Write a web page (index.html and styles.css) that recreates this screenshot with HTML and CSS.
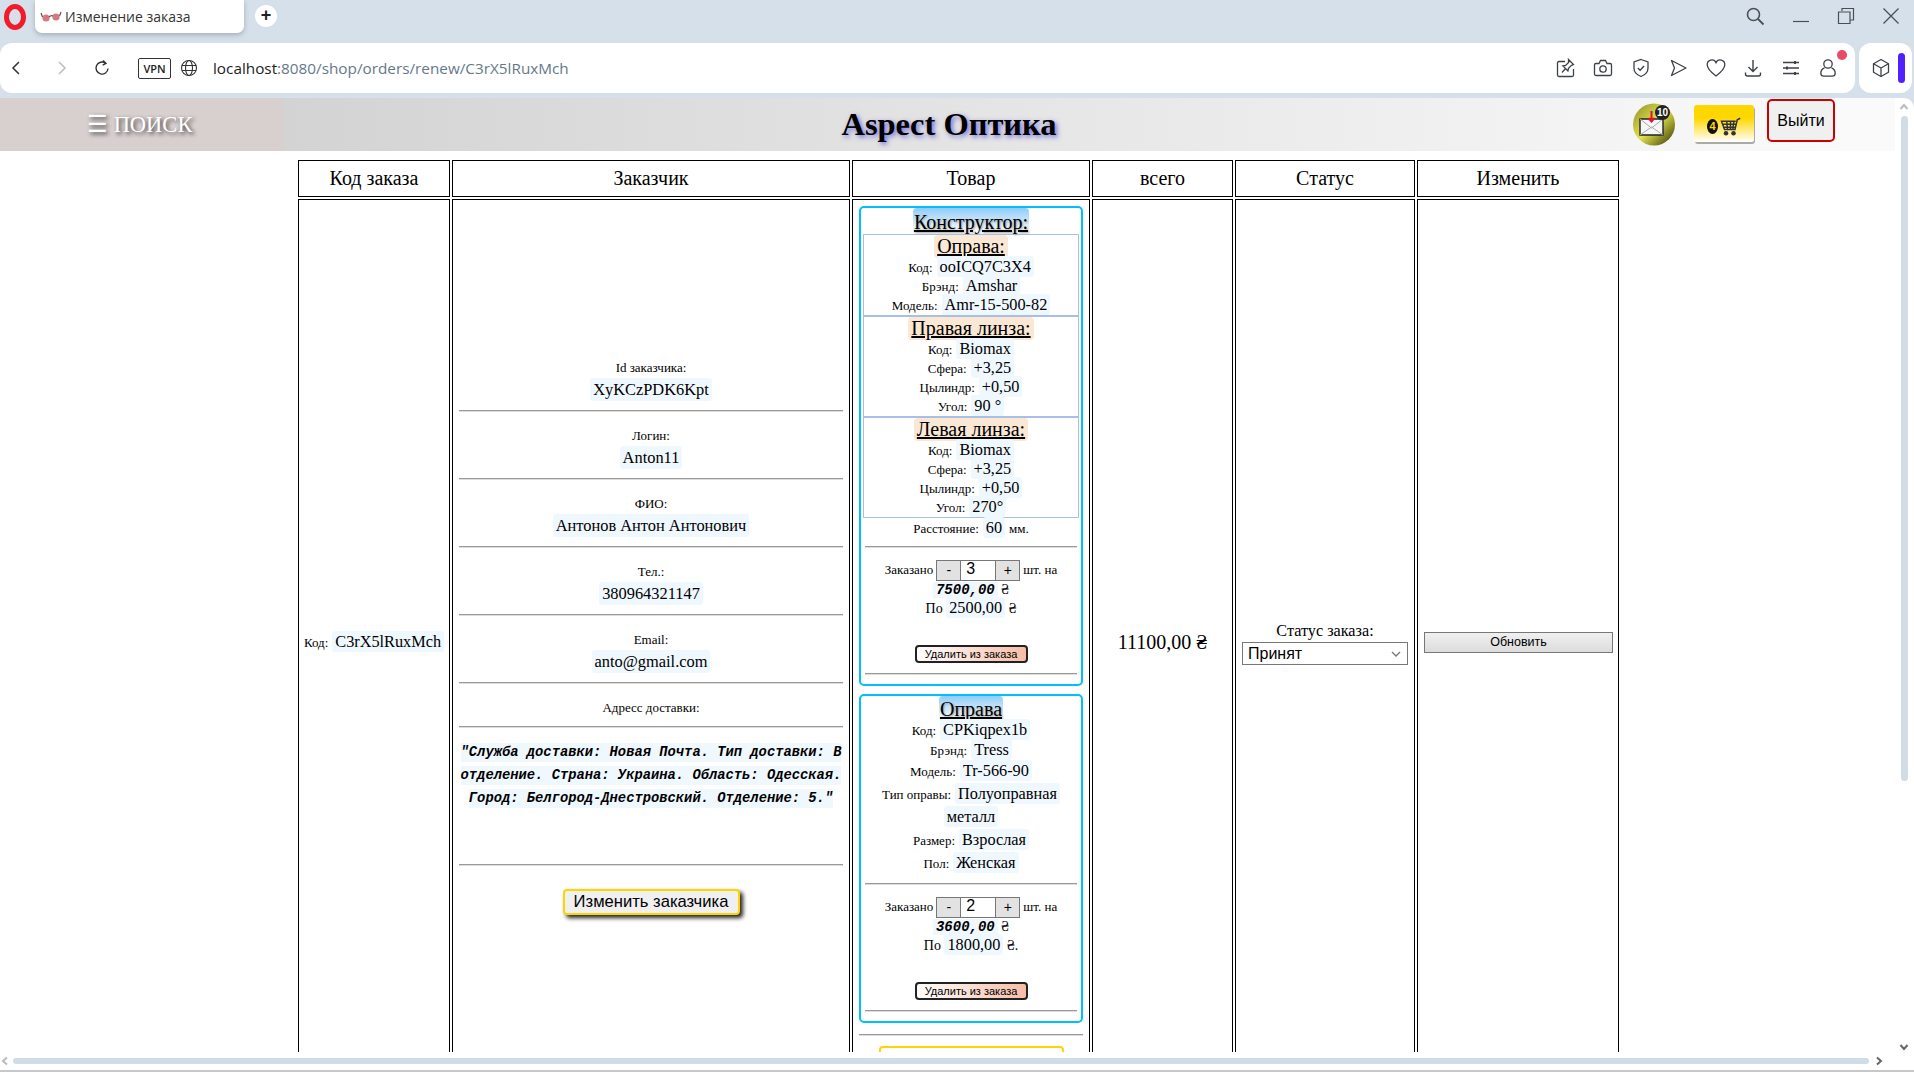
FILE: index.html
```html
<!DOCTYPE html>
<html lang="ru">
<head>
  <meta charset="UTF-8">
  <title>Изменение заказа</title>
  <link rel="stylesheet" href="styles.css">
</head>
<body>

  <div class="tabbar">
    <svg class="opera" width="24" height="28" viewBox="0 0 24 28"><ellipse cx="12" cy="14" rx="8.5" ry="10.5" fill="none" stroke="#f01b2d" stroke-width="5"/></svg>
    <div class="tab">
      <svg width="22" height="12" viewBox="0 0 22 12"><circle cx="6" cy="7" r="3.6" fill="#d9777f"/><circle cx="16" cy="6" r="3.6" fill="#d9777f"/><path d="M9 6q2-2 4-1M2.500 6 1 2M19.500 5 21 1" fill="none" stroke="#555" stroke-width="1.200"/></svg>
      <span>Изменение заказа</span>
    </div>
    <div class="newtab">+</div>
    <div class="winbtns">
      <svg width="20" height="20" viewBox="0 0 20 20"><circle cx="8.500" cy="8.500" r="6" fill="none" stroke="#4a4f55" stroke-width="1.600"/><path d="M13 13l5.500 5.500" stroke="#4a4f55" stroke-width="1.800"/></svg>
      <svg width="18" height="20" viewBox="0 0 18 20"><path d="M1 15.500h16" stroke="#4a4f55" stroke-width="1.200"/></svg>
      <svg width="18" height="18" viewBox="0 0 18 18"><path d="M5 4V1.500h11.500V13H13M1.500 5h11.500v11.500H1.500z" fill="none" stroke="#4a4f55" stroke-width="1.200"/></svg>
      <svg width="18" height="18" viewBox="0 0 18 18"><path d="M1.500 1.500l15 15M16.500 1.500l-15 15" stroke="#4a4f55" stroke-width="1.300"/></svg>
    </div>
  </div>

  <div class="toolbar">
    <div class="addressbar">
      <svg class="nav-ico" width="12" height="16" viewBox="0 0 12 16"><path d="M9 2 3 8l6 6" fill="none" stroke="#333" stroke-width="1.500"/></svg>
      <svg class="nav-ico fwd" width="12" height="16" viewBox="0 0 12 16"><path d="M3 2l6 6-6 6" fill="none" stroke="#b8bec4" stroke-width="1.500"/></svg>
      <svg class="nav-ico reload" width="18" height="18" viewBox="0 0 18 18"><path d="M15 9.500A6 6 0 1 1 12.500 4.200M10 1.500l3 2.800-3.300 1.800" fill="none" stroke="#333" stroke-width="1.400"/></svg>
      <div class="vpn">VPN</div>
      <svg class="globe" width="18" height="18" viewBox="0 0 18 18"><g fill="none" stroke="#333" stroke-width="1.100"><circle cx="9" cy="9" r="7.500"/><ellipse cx="9" cy="9" rx="3.500" ry="7.500"/><path d="M2 6.500h14M2 11.500h14"/></g></svg>
      <div class="url">localhost<span>:8080/shop/orders/renew/C3rX5lRuxMch</span></div>
      <div class="tools">
        <svg width="20" height="20" viewBox="0 0 20 20"><g fill="none" stroke="#3c4248" stroke-width="1.300"><path d="M9 3.500H3A1.500 1.500 0 0 0 1.500 5v12A1.500 1.500 0 0 0 3 18.500h13a1.500 1.500 0 0 0 1.500-1.500v-6"/><path d="M12.500 1.500l5 5-2 .8-3 3-.6 2.700-5-5 2.700-.6 3-3zM9.500 10.500l-3.500 4"/></g></svg>
        <svg width="20" height="20" viewBox="0 0 20 20"><g fill="none" stroke="#3c4248" stroke-width="1.300"><path d="M3 5.500h3L7.500 2.500h5L14 5.500h3A1.500 1.500 0 0 1 18.500 7v9a1.500 1.500 0 0 1-1.500 1.500H3A1.500 1.500 0 0 1 1.500 16V7A1.500 1.500 0 0 1 3 5.500z"/><circle cx="10" cy="11" r="3.200"/></g></svg>
        <svg width="20" height="20" viewBox="0 0 20 20"><g fill="none" stroke="#3c4248" stroke-width="1.300"><path d="M10 1.500l7 2.500v6c0 4-3 7-7 8.500-4-1.500-7-4.500-7-8.500V4z"/><path d="M6.800 10l2.300 2.300 4-4.300"/></g></svg>
        <svg width="20" height="20" viewBox="0 0 20 20"><path d="M3.500 2.500 18 10 3.500 17.500 6.500 10z" fill="none" stroke="#3c4248" stroke-width="1.300" stroke-linejoin="round"/></svg>
        <svg width="20" height="20" viewBox="0 0 20 20"><path d="M10 18C4 13.500 1.200 10.500 1.200 6.800A4.600 4.600 0 0 1 10 4.700a4.600 4.600 0 0 1 8.800 2.100C18.800 10.500 16 13.500 10 18z" fill="none" stroke="#3c4248" stroke-width="1.300"/></svg>
        <svg width="20" height="20" viewBox="0 0 20 20"><g fill="none" stroke="#3c4248" stroke-width="1.400"><path d="M10 2v11M5.500 9 10 13.500 14.500 9M2.500 14.500v1.500a2 2 0 0 0 2 2h11a2 2 0 0 0 2-2v-1.500"/></g></svg>
        <svg width="20" height="20" viewBox="0 0 20 20"><g fill="none" stroke="#3c4248" stroke-width="1.400"><path d="M2 4.500h16M2 10h16M2 15.500h16"/></g><path d="M13 3h2v3h-2zM5 8.500h2v3H5zM13 14h2v3h-2z" fill="#3c4248"/></svg>
        <div class="user-ico">
          <svg width="20" height="20" viewBox="0 0 20 20"><g fill="none" stroke="#3c4248" stroke-width="1.300"><circle cx="10" cy="6" r="4.200"/><path d="M6.500 9.800C3.800 11 2.800 13 2.800 15c0 2 1.200 3.200 3 3.200h8.400c1.800 0 3-1.200 3-3.200 0-2-1-4-3.700-5.200"/></g></svg>
          <span class="red-dot"></span>
        </div>
      </div>
    </div>
    <div class="sidebox">
      <svg width="20" height="20" viewBox="0 0 20 20"><g fill="none" stroke="#3c4248" stroke-width="1.300" stroke-linejoin="round"><path d="M10 1.500l7.500 4.200v8.600L10 18.500l-7.500-4.200V5.700z"/><path d="M2.500 5.700 10 10l7.500-4.300M10 10v8.500"/></g></svg>
      <span class="pill"></span>
    </div>
  </div>

  <div class="viewport">
    <nav class="topnav">
      <div class="search-link">☰ ПОИСК</div>
      <div class="site-title">Aspect Оптика</div>
      <div class="nav-right">
        <div class="msg-btn">
          <svg width="44" height="43" viewBox="0 0 44 43">
            <defs><linearGradient id="metal" x1="0" y1="0" x2="1" y2="1"><stop offset="0" stop-color="#8f8f28"/><stop offset=".5" stop-color="#e3e34e"/><stop offset=".8" stop-color="#77771f"/><stop offset="1" stop-color="#2c2c10"/></linearGradient></defs>
            <ellipse cx="22" cy="21.500" rx="21" ry="21" fill="url(#metal)"/>
            <path d="M8 16h23v16H8z" fill="#f6f6f6" stroke="#222" stroke-width="1.400"/>
            <path d="M8 32l11.500-8L31 32M8 16l11.500 9L31 16" fill="none" stroke="#aaa"/>
            <path d="M19.500 8v10M16.500 15l3 3.500 3-3.500" fill="none" stroke="#e01030" stroke-width="2"/>
          </svg>
          <span class="msg-count">10</span>
        </div>
        <div class="cart-btn">
          <span class="cart-count">4</span>
          <svg width="23" height="21" viewBox="0 0 30 28"><g fill="none" stroke="#333" stroke-width="2"><path d="M28 3l-4 2-3 13H7L3 7h19M5 11h17M6 15h15M10 7l1 11M15 7v11M19.500 7l-1.500 11"/></g><circle cx="9" cy="23" r="3" fill="#333"/><circle cx="19" cy="23" r="3" fill="#333"/></svg>
        </div>
        <button class="logout-btn">Выйти</button>
      </div>
    </nav>

    <div class="page">
      <table class="orders">
        <thead>
          <tr>
            <th class="col-code">Код заказа</th>
            <th class="col-client">Заказчик</th>
            <th class="col-goods">Товар</th>
            <th class="col-total">всего</th>
            <th class="col-status">Статус</th>
            <th class="col-edit">Изменить</th>
          </tr>
        </thead>
        <tbody>
          <tr>
            <td class="code"><span class="lbl">Код:</span> <span class="val-sm">C3rX5lRuxMch</span></td>

            <td class="client">
              <div class="lbl-line"><span class="lbl">Id заказчика:</span></div>
              <div class="val-line"><span class="val">XyKCzPDK6Kpt</span></div>
              <hr>
              <div class="lbl-line"><span class="lbl">Логин:</span></div>
              <div class="val-line"><span class="val">Anton11</span></div>
              <hr>
              <div class="lbl-line"><span class="lbl">ФИО:</span></div>
              <div class="val-line"><span class="val">Антонов Антон Антонович</span></div>
              <hr>
              <div class="lbl-line"><span class="lbl">Тел.:</span></div>
              <div class="val-line"><span class="val">380964321147</span></div>
              <hr>
              <div class="lbl-line"><span class="lbl">Email:</span></div>
              <div class="val-line"><span class="val">anto@gmail.com</span></div>
              <hr>
              <div class="lbl-line"><span class="lbl">Адресс доставки:</span></div>
              <hr class="hr-short">
              <div class="address">
                <div class="addr-line"><span>"Служба доставки: Новая Почта. Тип доставки: В</span></div>
                <div class="addr-line"><span>отделение. Страна: Украина. Область: Одесская.</span></div>
                <div class="addr-line"><span>Город: Белгород-Днестровский. Отделение: 5."</span></div>
              </div>
              <hr>
              <button class="client-btn">Изменить заказчика</button>
            </td>

            <td class="goods">
              <div class="card">
                <div class="card-title"><span>Конструктор:</span></div>
                <div class="part">
                  <div class="part-title"><span>Оправа:</span></div>
                  <div class="row"><span class="lbl">Код:</span> <span class="val-sm">ooICQ7C3X4</span></div>
                  <div class="row"><span class="lbl">Брэнд:</span> <span class="val-sm">Amshar</span></div>
                  <div class="row"><span class="lbl">Модель:</span> <span class="val-sm">Amr-15-500-82</span></div>
                </div>
                <div class="part">
                  <div class="part-title"><span>Правая линза:</span></div>
                  <div class="row"><span class="lbl">Код:</span> <span class="val-sm">Biomax</span></div>
                  <div class="row"><span class="lbl">Сфера:</span> <span class="val-sm">+3,25</span></div>
                  <div class="row"><span class="lbl">Цылиндр:</span> <span class="val-sm">+0,50</span></div>
                  <div class="row"><span class="lbl">Угол:</span> <span class="val-sm">90 °</span></div>
                </div>
                <div class="part">
                  <div class="part-title"><span>Левая линза:</span></div>
                  <div class="row"><span class="lbl">Код:</span> <span class="val-sm">Biomax</span></div>
                  <div class="row"><span class="lbl">Сфера:</span> <span class="val-sm">+3,25</span></div>
                  <div class="row"><span class="lbl">Цылиндр:</span> <span class="val-sm">+0,50</span></div>
                  <div class="row"><span class="lbl">Угол:</span> <span class="val-sm">270°</span></div>
                </div>
                <div class="row"><span class="lbl">Расстояние:</span> <span class="val-sm">60</span> <span class="lbl">мм.</span></div>
                <hr class="hr-card">
                <div class="qty-line">
                  <span class="lbl">Заказано</span>
                  <span class="qty"><button>-</button><input value="3" readonly><button>+</button></span>
                  <span class="lbl">шт. на</span>
                </div>
                <div class="sum"><b>7500,00</b> ₴</div>
                <div class="per"><span class="lbl-md">По</span> <span class="val-sm">2500,00</span> ₴</div>
                <button class="del-btn">Удалить из заказа</button>
                <hr class="hr-end">
              </div>

              <div class="card">
                <div class="card-title short"><span>Оправа</span></div>
                <div class="row first"><span class="lbl">Код:</span> <span class="val-sm">CPKiqpex1b</span></div>
                <div class="row"><span class="lbl">Брэнд:</span> <span class="val-sm">Tress</span></div>
                <div class="row wide"><span class="lbl">Модель:</span> <span class="val-sm">Tr-566-90</span></div>
                <div class="row wide"><span class="lbl">Тип оправы:</span> <span class="val-sm">Полуоправная</span></div>
                <div class="row wide"><span class="val-sm">металл</span></div>
                <div class="row wide"><span class="lbl">Размер:</span> <span class="val-sm">Взрослая</span></div>
                <div class="row wide"><span class="lbl">Пол:</span> <span class="val-sm">Женская</span></div>
                <hr class="hr-card">
                <div class="qty-line">
                  <span class="lbl">Заказано</span>
                  <span class="qty"><button>-</button><input value="2" readonly><button>+</button></span>
                  <span class="lbl">шт. на</span>
                </div>
                <div class="sum"><b>3600,00</b> ₴</div>
                <div class="per"><span class="lbl-md">По</span> <span class="val-sm">1800,00</span> ₴.</div>
                <button class="del-btn">Удалить из заказа</button>
                <hr class="hr-end">
              </div>

              <hr class="hr-last">
              <div class="add-btn"></div>
            </td>

            <td class="total">11100,00 ₴</td>

            <td>
              <div class="status-label">Статус заказа:</div>
              <div class="select-wrap">
                <select class="status-select"><option>Принят</option></select>
                <svg class="chevron" width="10" height="6" viewBox="0 0 10 6"><path d="M1 1l4 4 4-4" fill="none" stroke="#777" stroke-width="1.300"/></svg>
              </div>
            </td>

            <td><button class="update-btn">Обновить</button></td>
          </tr>
        </tbody>
      </table>
    </div>

    <div class="hscroll">
      <svg width="10" height="10" viewBox="0 0 10 10"><path d="M7 1.500 3 5l4 3.500" fill="none" stroke="#bbb" stroke-width="2"/></svg>
      <div class="hthumb"></div>
      <svg width="10" height="10" viewBox="0 0 10 10"><path d="M3 1.500 7 5 3 8.500" fill="none" stroke="#666" stroke-width="2"/></svg>
    </div>
    <div class="bottom-line"></div>

    <div class="vscroll">
      <svg width="10" height="10" viewBox="0 0 10 10"><path d="M1.500 7 5 3l3.500 4" fill="none" stroke="#bbb" stroke-width="2"/></svg>
      <div class="vthumb"></div>
      <svg class="vdown" width="10" height="10" viewBox="0 0 10 10"><path d="M1.500 3 5 7l3.500-4" fill="none" stroke="#666" stroke-width="2"/></svg>
    </div>
  </div>

</body>
</html>
```

FILE: styles.css
```css
* { box-sizing: border-box; }
html, body { height: 100%; }
body { margin: 0; background: #d6e0ea; font-family: "Liberation Serif", serif; color: #000; overflow: hidden; }

/* browser chrome */
.tabbar { height: 43px; display: flex; align-items: flex-start; font-family: "Open Sans", sans-serif; }
.opera { margin: 3px 0 0 3px; flex: none; }
.tab { width: 209px; height: 33px; margin-left: 8px; background: #fff; border-radius: 0 0 7px 7px; box-shadow: 0 2px 5px rgba(60, 80, 100, .35); display: flex; align-items: center; gap: 3px; padding-left: 5px; font-size: 14px; color: #333; }
.newtab { width: 22px; height: 22px; margin: 5px 0 0 11px; border-radius: 50%; background: #fff; text-align: center; font: bold 18px/21px "Liberation Sans", sans-serif; color: #222; }
.winbtns { margin-left: auto; display: flex; align-items: center; gap: 27px; padding: 6px 14px 0 0; }

.toolbar { height: 50px; display: flex; gap: 4px; }
.addressbar { width: 1855px; background: #fff; border-radius: 12px; display: flex; align-items: center; padding: 0 17px 0 10px; }
.nav-ico { flex: none; }
.fwd { margin-left: 34px; }
.reload { margin-left: 25px; }
.vpn { width: 33px; height: 21px; margin-left: 27px; border: 1px solid #333; border-radius: 2px; font: 600 11px/19px "Open Sans", sans-serif; text-align: center; color: #222; }
.globe { margin-left: 9px; flex: none; }
.url { margin-left: 15px; font: 15.3px "Open Sans", sans-serif; color: #222; }
.url span { color: #66788a; }
.tools { margin-left: auto; display: flex; align-items: center; gap: 17.5px; }
.user-ico { position: relative; height: 20px; }
.red-dot { position: absolute; top: -8px; left: 19px; width: 10px; height: 10px; border-radius: 50%; background: #e94b63; }
.sidebox { width: 53px; background: #fff; border-radius: 12px; display: flex; align-items: center; padding-left: 12px; gap: 7px; }
.pill { width: 7px; height: 30px; border-radius: 4px; background: #5020ff; }

/* page area */
.viewport { position: relative; margin-top: 5px; height: 974px; background: #fff; border-radius: 0 10px 0 0; overflow: hidden; }
.topnav { height: 53px; width: 1895px; display: flex; align-items: center; background: linear-gradient(to right, #cccccc, #fafafa 97%); }
.search-link { width: 283px; height: 53px; flex: none; background: #d8cfcf; color: #fff; font-size: 22.5px; line-height: 54px; padding-left: 87px; text-shadow: 2px 2px 4px #333; }
.site-title { flex: 1; text-align: center; font-size: 32.5px; font-weight: bold; text-shadow: 2px 2px 5px #6a6ad8; }
.nav-right { flex: none; width: 280px; height: 53px; display: flex; align-items: flex-start; padding-left: 17px; }
.msg-btn { position: relative; width: 44px; height: 43px; margin-top: 5px; }
.msg-count { position: absolute; top: 2px; right: 6px; width: 15px; height: 15px; border-radius: 50%; background: #222; color: #fff; font: bold 10px/15px "Liberation Sans", sans-serif; text-align: center; }
.cart-btn { width: 60px; height: 37px; margin: 7px 0 0 18px; background: linear-gradient(#ffd700 35%, #fff); border-radius: 3px; box-shadow: 1px 2px 0 #aaa; display: flex; align-items: center; padding: 5px 0 0 13px; }
.cart-count { width: 11px; height: 15px; margin-right: 1px; border-radius: 50%; background: #111; color: #ffd700; font: bold 11px/15px "Liberation Sans", sans-serif; text-align: center; }
.logout-btn { width: 68px; height: 43px; margin: 1px 0 0 13px; border: 2px solid #cc0000; border-radius: 5px; background: #f0f0f0; font: 16px "Liberation Sans", sans-serif; color: #000; padding: 0; }

.page { height: 901px; overflow: hidden; padding-left: 3px; }
.orders { width: 1325px; margin: 7px auto 0; table-layout: fixed; border-collapse: separate; border-spacing: 2px; }
.orders th, .orders td { border: 1px solid #000; padding: 0 6px; text-align: center; vertical-align: middle; }
.orders th { height: 37px; font-size: 20px; font-weight: normal; }
.col-code { width: 152px; }
.col-client { width: 398px; }
.col-goods { width: 238px; }
.col-total { width: 141px; }
.col-status { width: 180px; }
.col-edit { width: 202px; }

.code { white-space: nowrap; padding: 0 !important; }
.lbl { font-size: 13px; }
.lbl-md { font-size: 14px; }
.val { font-size: 16.4px; background: #f0f8ff; padding: 2px 3px; border-radius: 3px; }
.val-sm { font-size: 16.3px; background: #f0f8ff; padding: 1px 3px; border-radius: 3px; }

/* client column */
hr { height: 2px; border: 0; border-top: 1px solid #999; border-bottom: 1px solid #ddd; }
.client hr { margin: 10px 0 12px; }
.lbl-line, .val-line { height: 22px; line-height: 22px; }
.val-line { padding-top: 1px; }
.client .hr-short { margin: 8px 0 13px; }
.address { width: 100%; height: 113px; font: italic bold 13.8px/23px "Liberation Mono", monospace; white-space: nowrap; }
.addr-line { height: 23px; }
.addr-line span { background: #f0f8ff; padding: 2px 0; }
.client-btn { display: block; margin: 23px auto 14px; width: 177px; height: 26px; padding: 0; border: 2px solid #ffd400; border-radius: 4px; background: #f0f0f0; box-shadow: 3px 3px 4px #222; font: 16.6px "Liberation Sans", sans-serif; color: #000; }

/* goods column */
.goods { padding-top: 6px !important; vertical-align: top !important; }
.card { border: 2px solid #00bfff; border-radius: 5px; padding: 0 2px; margin-bottom: 8px; }
.card-title { font-size: 20px; height: 26px; line-height: 28px; }
.card-title span { display: inline-block; height: 25px; padding: 0 1px; text-decoration: underline; background: linear-gradient(#90ccf8, #fff); border-radius: 4px; text-shadow: 1px 1px 2px #999; }
.card-title.short { height: 24px; line-height: 26px; }
.card-title.short span { height: 24px; }
.part { border: 1px solid #a8c0e8; padding-bottom: 1px; }
.part-title { font-size: 20px; height: 22px; line-height: 23px; }
.part-title span { display: inline-block; text-decoration: underline; background: #fae8d4; border-radius: 4px; padding: 0 3px; }
.row { height: 19px; line-height: 19px; }
.row.first { height: 20px; }
.row.wide { height: 23px; line-height: 23px; }
.hr-card { margin: 9px 2px 11px; }
.qty-line { height: 22px; display: flex; align-items: center; justify-content: center; gap: 3px; }
.qty { display: inline-flex; height: 21px; }
.qty button { width: 25px; height: 21px; padding: 0; border: 1px solid #777; background: #e2e2e2; font: 14px "Liberation Sans", sans-serif; color: #000; }
.qty input { width: 34px; height: 21px; padding: 0 0 3px 5px; border: 0; border-top: 1px solid #777; border-bottom: 1px solid #777; font: 16px "Liberation Sans", sans-serif; color: #000; outline: 0; }
.sum { height: 18px; line-height: 18px; font-size: 14px; }
.sum b { font: italic bold 14px "Liberation Mono", monospace; background: #f0f8ff; padding: 0 3px; }
.per { height: 18px; line-height: 18px; font-size: 14px; }
.del-btn { display: block; width: 113px; height: 18px; margin: 28px auto 10px; padding: 0; border: 2px solid #222; border-radius: 4px; background: linear-gradient(to right, #fff, #f6bda6); font: 11px "Liberation Sans", sans-serif; color: #000; }
.hr-end { margin: 0 2px 9px; }
.hr-last { margin: 11px 0 10px; }
.add-btn { width: 185px; height: 28px; margin: 0 auto 10px; border: 2px solid #ffd400; border-radius: 4px; }

/* other columns */
.total { font-size: 20px; }
.status-label { font-size: 16.2px; line-height: 18px; padding-top: 2px; }
.select-wrap { position: relative; margin-top: 2px; }
.status-select { display: block; width: 166px; height: 23px; margin: 0 auto; padding-left: 5px; border: 1px solid #777; background: #fff; font: 16px "Liberation Sans", sans-serif; color: #000; appearance: none; }
.chevron { position: absolute; top: 9px; right: 7px; }
.update-btn { width: 189px; height: 21px; padding: 0; border: 1px solid #777; background: linear-gradient(#f0f0f0, #dcdcdc); font: 12.5px "Liberation Sans", sans-serif; color: #000; }

/* scrollbars */
.hscroll { height: 18px; display: flex; align-items: center; padding: 0 22px 0 0; }
.hthumb { width: 1856px; height: 6px; margin: 0 5px 0 3px; border-radius: 3px; background: #d0dce6; }
.bottom-line { height: 2px; background: #c8c8c8; }
.vscroll { position: absolute; top: 4px; right: 5px; width: 10px; height: 950px; display: flex; flex-direction: column; align-items: center; }
.vthumb { width: 7px; height: 665px; margin-top: 4px; border-radius: 4px; background: #d0dce6; }
.vdown { margin-top: auto; }
```
